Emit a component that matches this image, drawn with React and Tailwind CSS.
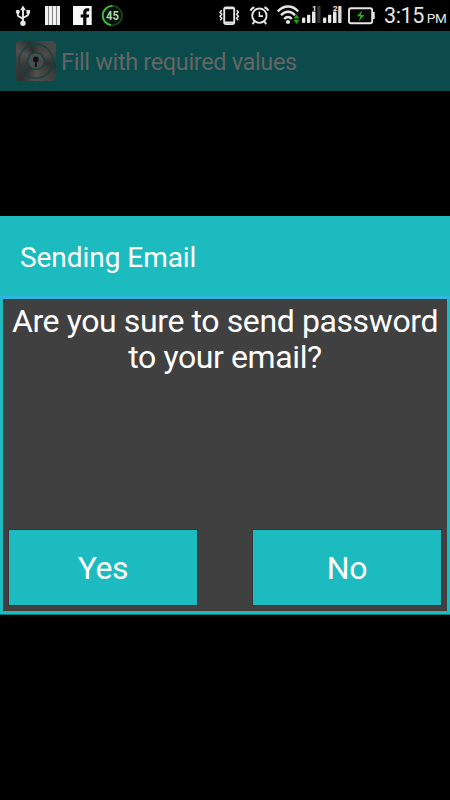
import React from "react";

const UsbIcon = () => (
  <svg className="h-8 w-4 shrink-0" viewBox="15 0 16 32" fill="none" stroke="#e8e8e8">
    <path d="M23 9v14M17.8 12v3.2c0 1.8 5.2 2.3 5.2 4.6M28.2 12v2.6c0 1.8-5.2 2-5.2 4.2" strokeWidth="1.9" />
    <path d="M23 5.6l2.9 4.6h-5.8z" fill="#e8e8e8" stroke="none" />
    <circle cx="17.8" cy="11.8" r="2" fill="#e8e8e8" stroke="none" />
    <rect x="26.4" y="10" width="3.6" height="3.6" fill="#e8e8e8" stroke="none" />
    <circle cx="23" cy="23.3" r="2.7" fill="#e8e8e8" stroke="none" />
  </svg>
);

const BarsIcon = () => (
  <svg className="ml-3.5 h-8 w-[15px] shrink-0" viewBox="45 0 15 32">
    <rect x="45" y="6" width="15" height="19" fill="#f0f0f0" />
    <path d="M48.5 6v19M52.5 6v19M56.5 6v19" stroke="#858585" strokeWidth="1" />
  </svg>
);

const FacebookIcon = () => (
  <svg className="ml-[13px] h-8 w-[19px] shrink-0" viewBox="73 0 19 32">
    <rect x="73" y="6" width="18.7" height="19" fill="#f7f7f7" />
    <path
      d="M83.2 25v-7.4h-2.5v-3h2.5v-2.2c0-2.7 1.6-4.1 4-4.1h2v2.9h-1.3c-1.2 0-1.5.6-1.5 1.6v1.8h2.8l-.4 3h-2.4V25z"
      fill="#050505"
    />
  </svg>
);

const BatteryPercentIcon = () => (
  <svg className="ml-[9px] h-8 w-[23px] shrink-0" viewBox="101 0 23 32">
    <circle cx="112.4" cy="15.6" r="9.7" fill="#061006" stroke="#17471b" strokeWidth="1.7" />
    <path d="M111 25.2A9.7 9.7 0 0 1 112.4 5.9" fill="none" stroke="#3cbd3c" strokeWidth="1.8" />
    <text
      x="112.4"
      y="20"
      textAnchor="middle"
      textLength="13"
      lengthAdjust="spacingAndGlyphs"
      fontFamily="Roboto, sans-serif"
      fontSize="12.5"
      fontWeight="700"
      fill="#a5dba5"
    >
      45
    </text>
  </svg>
);

const VibrateIcon = () => (
  <svg className="h-8 w-[22px] shrink-0" viewBox="218 0 22 32" fill="none" stroke="#e6e6e6">
    <rect x="224.2" y="7.5" width="10" height="16.6" rx="1.8" strokeWidth="1.9" />
    <path d="M224.5 8.1h9.4M224.5 22.5h9.4" strokeWidth="2.2" />
    <path d="M221.7 10.2l-1.6 2 1.6 2-1.6 2 1.6 2-1.4 2M236.7 10.2l1.6 2-1.6 2 1.6 2-1.6 2 1.4 2" strokeWidth="1.6" />
  </svg>
);

const AlarmIcon = () => (
  <svg className="ml-[9px] h-8 w-[21px] shrink-0" viewBox="249 0 21 32" fill="none" stroke="#e6e6e6">
    <circle cx="259.4" cy="15.7" r="7.2" strokeWidth="1.9" />
    <path d="M259.4 11.4v4.7h3.6" strokeWidth="1.6" />
    <path d="M250.6 10.8c.4-1.6 1.8-3 3.8-3.6M268.2 10.8c-.4-1.6-1.8-3-3.8-3.6" strokeWidth="2" />
    <path d="M254.6 21.2l-2 3M264.2 21.2l2 3" strokeWidth="1.9" />
  </svg>
);

const WifiIcon = () => (
  <svg className="ml-[7px] h-8 w-6 shrink-0" viewBox="277 0 24 32" fill="none" stroke="#e6e6e6">
    <path d="M277.8 11.5c5.8-6.6 14.6-6.6 20.4 0" strokeWidth="2.4" />
    <path d="M281 15.3c4.2-4.7 9.8-4.7 14 0" strokeWidth="2.4" />
    <path d="M284.2 19c2.3-2.6 5.3-2.6 7.6 0" strokeWidth="2.4" />
    <circle cx="288" cy="22" r="2.1" fill="#e6e6e6" stroke="none" />
    <path d="M296.5 14.3l2.9 4.2h-5.8zM296.5 24.1l2.9-4.1h-5.8z" fill="#1fa80c" stroke="none" />
  </svg>
);

const SignalIcon = ({ sim, level }) => (
  <svg className="ml-px h-8 w-5 shrink-0" viewBox="0 0 20 32">
    <rect x="0" y="17.4" width="3.3" height="5.6" rx="1" fill="#e6e6e6" />
    <rect x="5" y="14.8" width="3.3" height="8.2" rx="0.8" fill="#e6e6e6" />
    <rect x="10" y="11.5" width="3.5" height="11.5" rx="0.6" fill="#e6e6e6" />
    <rect x="15.2" y="6" width="3.3" height="17" rx="0.6" fill={level > 3 ? "#dcdcdc" : "#353535"} />
    <text
      x="12.4"
      y="10.8"
      textAnchor="middle"
      fontFamily="Roboto, sans-serif"
      fontSize="8"
      fontWeight="700"
      fill="#f2f2f2"
    >
      {sim}
    </text>
  </svg>
);

const BatteryIcon = () => (
  <svg className="ml-[5px] h-8 w-7 shrink-0" viewBox="348 0 28 32">
    <rect x="349" y="8.2" width="23.2" height="15" rx="2" fill="#050505" stroke="#e6e6e6" strokeWidth="1.9" />
    <path d="M373 12.1h1.7v7H373z" fill="#e6e6e6" />
    <path d="M362.3 10.2l-5.4 6h3.4l-1.4 5 5.4-6.1h-3.5z" fill="#21b40d" />
  </svg>
);

const LockLogo = () => (
  <div className="h-10 w-10 shrink-0 rounded bg-[conic-gradient(from_20deg,#454341,#4d4946,#303030,#434140,#53504d,#313131,#3c3b3a,#524e4c,#2e2e2e,#454341)]">
    <svg className="h-10 w-10" viewBox="0 0 40 40" fill="none" stroke="#0c4644">
      <circle cx="19.9" cy="20.2" r="17" strokeWidth="1.4" />
      <circle cx="19.9" cy="20.2" r="8.3" fill="#4c4b4b" strokeWidth="1.4" />
      <circle cx="19.9" cy="18.4" r="2.8" fill="#0b1414" stroke="none" />
      <path d="M19 18h1.8v8H19z" fill="#0b1414" stroke="none" />
    </svg>
  </div>
);

const StatusBar = () => (
  <div className="flex h-[31px] items-start overflow-hidden bg-black pl-[15px] text-[#e6e6e6]">
    <UsbIcon />
    <BarsIcon />
    <FacebookIcon />
    <BatteryPercentIcon />
    <div className="ml-auto flex w-[232px] items-start">
      <VibrateIcon />
      <AlarmIcon />
      <WifiIcon />
      <SignalIcon sim="1" level={3} />
      <SignalIcon sim="2" level={4} />
      <BatteryIcon />
      <div className="ml-2 flex items-baseline gap-[3px] whitespace-nowrap leading-8">
        <span className="text-[21.5px] tracking-[-0.4px]">3:15</span>
        <span className="text-[13.5px] tracking-[-0.3px]">PM</span>
      </div>
    </div>
  </div>
);

const DialogButton = ({ children }) => (
  <button
    type="button"
    className="h-[75px] w-[188px] bg-[#1cbbbf] text-[32px] tracking-[-0.4px] text-white outline-1 outline-[#373434]"
  >
    {children}
  </button>
);

const ConfirmDialog = ({ title, message }) => (
  <div className="mt-[125px] flex h-[399px] flex-col border-b border-[#087c80] bg-[#1cbbbf] text-white">
    <h2 className="flex h-20 items-center pt-[3px] pl-5 text-[28px] tracking-[-0.05px]">{title}</h2>
    <div className="h-[3px] bg-[#2fb5e0]" />
    <div className="mx-[3px] flex h-[312px] flex-col justify-between border-b border-[#4b3535] bg-[#404040] pt-1 pb-[5px]">
      <p className="text-center text-[32px] leading-9 tracking-[-0.39px]">{message}</p>
      <div className="flex justify-between px-1.5">
        <DialogButton>Yes</DialogButton>
        <DialogButton>No</DialogButton>
      </div>
    </div>
  </div>
);

export default function App() {
  return (
    <div className="h-[800px] w-[450px] overflow-hidden bg-black font-[Roboto,sans-serif]">
      <StatusBar />
      <header className="flex h-[60px] items-center bg-[#0b4b4b] pl-4">
        <LockLogo />
        <h1 className="ml-[5px] pt-1 text-[23.5px] tracking-[-0.35px] text-[#656565]">Fill with required values</h1>
      </header>
      <ConfirmDialog
        title="Sending Email"
        message={
          <>
            Are you sure to send password
            <br />
            to your email?
          </>
        }
      />
    </div>
  );
}
